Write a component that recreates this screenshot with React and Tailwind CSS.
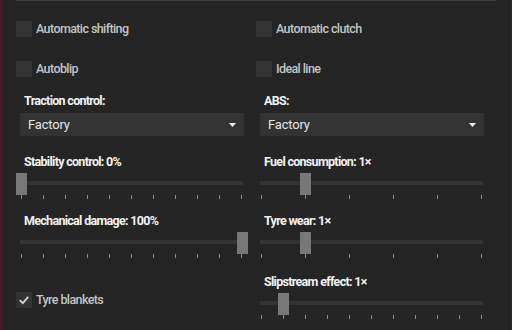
import React from 'react';

const font = { fontFamily: 'Roboto, "Liberation Sans", sans-serif' };

function Check({ label, checked }) {
  return (
    <div className="flex items-center h-4">
      <div className="w-4 h-4 bg-[#333333] flex items-center justify-center">
        {checked && (
          <svg width="12" height="12" viewBox="0 0 12 12">
            <polyline points="1.8,6.2 4.8,9.2 10.2,2.8" fill="none" stroke="#d4d4d4" strokeWidth="1.8" />
          </svg>
        )}
      </div>
      <span className="ml-1 text-[12.5px] font-medium text-[#c4c4c4] tracking-[-0.6px] leading-4">{label}</span>
    </div>
  );
}

function Label({ children }) {
  return (
    <div className="pl-2 h-4 leading-4 text-[12.5px] font-bold text-[#f2f2f2] tracking-[-0.7px]">{children}</div>
  );
}

function Select({ label }) {
  return (
    <div>
      <Label>{label}</Label>
      <div className="mt-1 ml-1 w-[224px] h-[23px] bg-[#333333] flex items-center justify-between pl-2 pr-2">
        <span className="text-[13px] text-[#e6e6e6] tracking-[-0.2px]">Factory</span>
        <svg width="7" height="4" viewBox="0 0 7 4">
          <polygon points="0,0 7,0 3.5,4" fill="#f0f0f0" />
        </svg>
      </div>
    </div>
  );
}

function Slider({ label, value, ticks }) {
  const left = 5 + value * 221 - 5.5;
  return (
    <div>
      <Label>{label}</Label>
      <div className="relative mt-[3px] h-[26px]">
        <div className="absolute left-[4px] right-[1px] top-[8px] h-[4px] bg-[#333333]" />
        <div className="absolute left-[5px] right-[2px] bottom-0 flex justify-between">
          {Array.from({ length: ticks }).map((_, i) => (
            <div key={i} className="w-px h-[4px] bg-[#8a8a8a]" />
          ))}
        </div>
        <div className="absolute top-0 w-[11px] h-[22px] bg-[#787878]" style={{ left }} />
      </div>
    </div>
  );
}

export default function App() {
  return (
    <div className="w-[512px] h-[330px] bg-[#252525] border-l-2 border-r border-[#5c1326] overflow-hidden" style={font}>
      <div className="ml-[14px] w-[480px] h-px bg-[#3d3d3d]" />
      <div className="pl-[14px] pt-[20px] grid grid-cols-[228px_228px] gap-x-3">
        <Check label="Automatic shifting" />
        <Check label="Automatic clutch" />
        <div className="mt-6"><Check label="Autoblip" /></div>
        <div className="mt-6"><Check label="Ideal line" /></div>
        <div className="mt-4"><Select label="Traction control:" /></div>
        <div className="mt-4"><Select label="ABS:" /></div>
        <div className="mt-[18px]"><Slider label="Stability control: 0%" value={0} ticks={11} /></div>
        <div className="mt-[18px]"><Slider label="Fuel consumption: 1×" value={0.2} ticks={6} /></div>
        <div className="mt-[14px]"><Slider label="Mechanical damage: 100%" value={1} ticks={11} /></div>
        <div className="mt-[14px]"><Slider label="Tyre wear: 1×" value={0.2} ticks={6} /></div>
        <div className="mt-[34px]"><Check label="Tyre blankets" checked /></div>
        <div className="mt-[16px]"><Slider label="Slipstream effect: 1×" value={0.1} ticks={11} /></div>
      </div>
    </div>
  );
}
